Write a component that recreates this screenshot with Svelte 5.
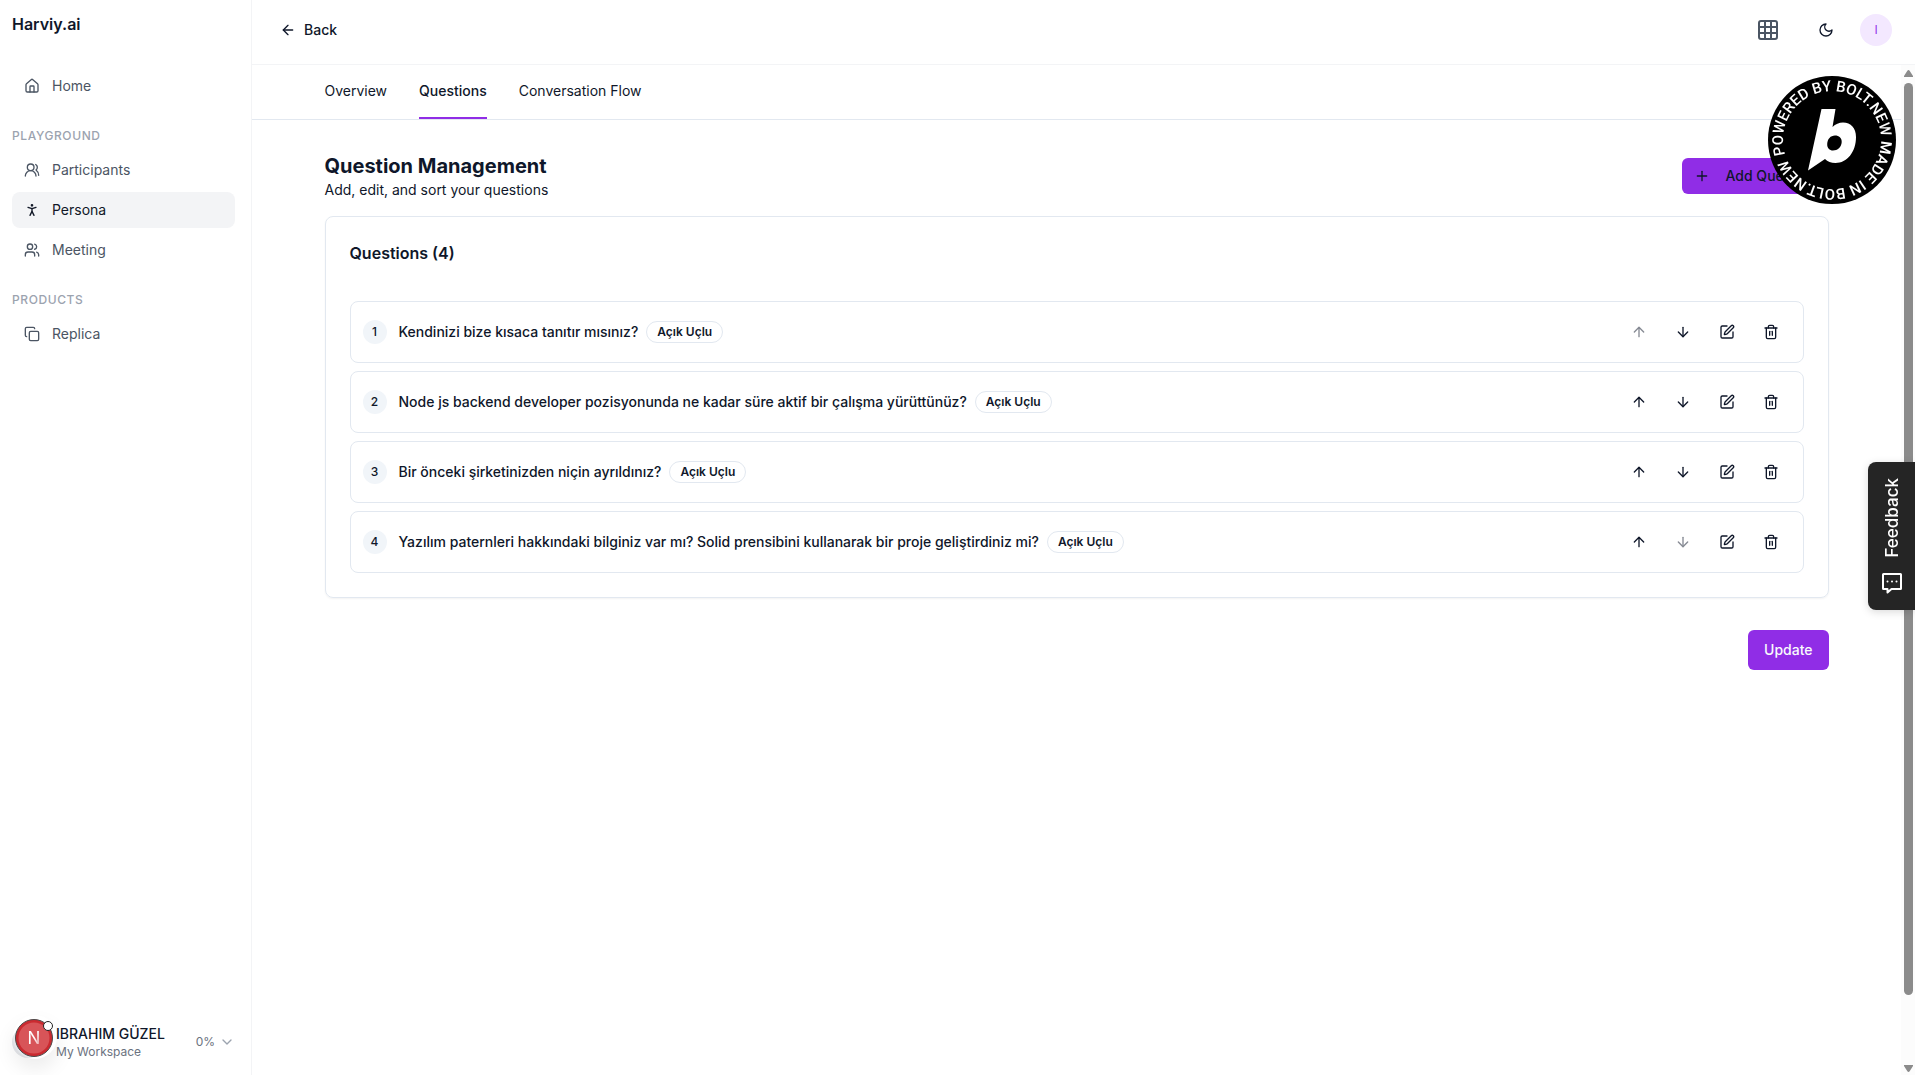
<script lang="ts">
    type Question = { text: string; type: string };

    const groups = [
        { title: "", items: [{ label: "Home", icon: "home" }] },
        {
            title: "Playground",
            items: [
                { label: "Participants", icon: "participants" },
                { label: "Persona", icon: "persona" },
                { label: "Meeting", icon: "meeting" },
            ],
        },
        { title: "Products", items: [{ label: "Replica", icon: "replica" }] },
    ];

    const tabs = ["Overview", "Questions", "Conversation Flow"];

    // lucide outlines, 24x24
    const icons: Record<string, string[]> = {
        home: [
            "M15 21v-8a1 1 0 0 0-1-1h-4a1 1 0 0 0-1 1v8",
            "M3 10a2 2 0 0 1 .709-1.528l7-5.999a2 2 0 0 1 2.582 0l7 5.999A2 2 0 0 1 21 10v9a2 2 0 0 1-2 2H5a2 2 0 0 1-2-2z",
        ],
        participants: [
            "M18 21a8 8 0 0 0-16 0",
            "M10 13a5 5 0 1 0 0-10a5 5 0 0 0 0 10z",
            "M22 20c0-3.37-2-6.5-4-8a5 5 0 0 0-.45-8.3",
        ],
        meeting: [
            "M16 21v-2a4 4 0 0 0-4-4H6a4 4 0 0 0-4 4v2",
            "M9 11a4 4 0 1 0 0-8a4 4 0 0 0 0 8z",
            "M22 21v-2a4 4 0 0 0-3-3.87",
            "M16 3.13a4 4 0 0 1 0 7.75",
        ],
        persona: [
            "M12 6a1 1 0 1 0 0-2a1 1 0 0 0 0 2z",
            "m9 20 3-6 3 6",
            "m6 8 6 2 6-2",
            "M12 10v4",
        ],
        replica: [
            "M10 8h10a2 2 0 0 1 2 2v10a2 2 0 0 1-2 2H10a2 2 0 0 1-2-2V10a2 2 0 0 1 2-2z",
            "M4 16c-1.1 0-2-.9-2-2V4c0-1.1.9-2 2-2h10c1.1 0 2 .9 2 2",
        ],
        back: ["m12 19-7-7 7-7", "M19 12H5"],
        grid: [
            "M5 3h14a2 2 0 0 1 2 2v14a2 2 0 0 1-2 2H5a2 2 0 0 1-2-2V5a2 2 0 0 1 2-2z",
            "M3 9h18",
            "M3 15h18",
            "M9 3v18",
            "M15 3v18",
        ],
        moon: ["M12 3a6 6 0 0 0 9 9 9 9 0 1 1-9-9Z"],
        plus: ["M5 12h14", "M12 5v14"],
        up: ["m5 12 7-7 7 7", "M12 19V5"],
        down: ["M12 5v14", "m19 12-7 7-7-7"],
        edit: [
            "M12 3H5a2 2 0 0 0-2 2v14a2 2 0 0 0 2 2h14a2 2 0 0 0 2-2v-7",
            "M18.375 2.625a1 1 0 0 1 3 3l-9.013 9.014a2 2 0 0 1-.853.505l-2.873.84a.5.5 0 0 1-.62-.62l.84-2.873a2 2 0 0 1 .506-.852z",
        ],
        trash: [
            "M3 6h18",
            "M19 6v14c0 1-1 2-2 2H7c-1 0-2-1-2-2V6",
            "M8 6V4c0-1 1-2 2-2h4c1 0 2 1 2 2v2",
            "M10 11v6",
            "M14 11v6",
        ],
        chevron: ["m6 9 6 6 6-6"],
    };

    let activeItem = $state("Persona");
    let activeTab = $state("Questions");
    let questions = $state<Question[]>([
        { text: "Kendinizi bize kısaca tanıtır mısınız?", type: "Açık Uçlu" },
        {
            text: "Node js backend developer pozisyonunda ne kadar süre aktif bir çalışma yürüttünüz?",
            type: "Açık Uçlu",
        },
        { text: "Bir önceki şirketinizden niçin ayrıldınız?", type: "Açık Uçlu" },
        {
            text: "Yazılım paternleri hakkındaki bilginiz var mı? Solid prensibini kullanarak bir proje geliştirdiniz mi?",
            type: "Açık Uçlu",
        },
    ]);

    function move(index: number, step: number) {
        const [item] = questions.splice(index, 1);
        questions.splice(index + step, 0, item);
    }

    function remove(index: number) {
        questions.splice(index, 1);
    }
</script>

{#snippet icon(name: string, size = 16)}
    <svg
        class="icon"
        width={size}
        height={size}
        viewBox="0 0 24 24"
        aria-hidden="true"
    >
        {#each icons[name] as d}
            <path {d} />
        {/each}
    </svg>
{/snippet}

<div class="app">
    <aside class="sidebar">
        <div class="brand">Harviy.ai</div>
        <nav class="menu">
            {#each groups as group}
                <div class="group">
                    {#if group.title}
                        <div class="group-title">{group.title}</div>
                    {/if}
                    <div class="group-items">
                        {#each group.items as item}
                            <a
                                href="#{item.icon}"
                                class="menu-item"
                                class:active={activeItem === item.label}
                                onclick={() => (activeItem = item.label)}
                            >
                                {@render icon(item.icon)}
                                <span>{item.label}</span>
                            </a>
                        {/each}
                    </div>
                </div>
            {/each}
        </nav>
        <button class="account">
            <span class="account-avatar"></span>
            <span class="account-text">
                <span class="account-name">IBRAHIM GÜZEL</span>
                <span class="account-space">My Workspace</span>
            </span>
            <span class="account-usage">0%</span>
            {@render icon("chevron")}
        </button>
    </aside>

    <div class="main">
        <header class="topbar">
            <button class="back">
                {@render icon("back")}
                Back
            </button>
            <div class="topbar-actions">
                <button class="icon-button grid-button" aria-label="Apps">
                    {@render icon("grid", 24)}
                </button>
                <button class="icon-button moon-button" aria-label="Theme">
                    {@render icon("moon")}
                </button>
                <button class="user">I</button>
            </div>
        </header>

        <div class="body">
            <div class="page">
                <nav class="tabs">
                    <div class="container tab-list">
                        {#each tabs as tab}
                            <button
                                class="tab"
                                class:selected={activeTab === tab}
                                onclick={() => (activeTab = tab)}>{tab}</button
                            >
                        {/each}
                    </div>
                </nav>

                <main class="container content">
                    <div class="heading">
                        <div>
                            <h1>Question Management</h1>
                            <p>Add, edit, and sort your questions</p>
                        </div>
                        <button class="add">
                            {@render icon("plus")}
                            Add Question
                        </button>
                    </div>

                    <section class="card">
                        <h2>Questions ({questions.length})</h2>
                        <ul class="questions">
                            {#each questions as question, i (question.text)}
                                <li class="question">
                                    <span class="number">{i + 1}</span>
                                    <div class="question-body">
                                        <span class="question-text">{question.text}</span>
                                        <span class="badge">{question.type}</span>
                                    </div>
                                    <div class="actions">
                                        <button
                                            aria-label="Move up"
                                            disabled={i === 0}
                                            onclick={() => move(i, -1)}
                                        >
                                            {@render icon("up")}
                                        </button>
                                        <button
                                            aria-label="Move down"
                                            disabled={i === questions.length - 1}
                                            onclick={() => move(i, 1)}
                                        >
                                            {@render icon("down")}
                                        </button>
                                        <button aria-label="Edit">
                                            {@render icon("edit")}
                                        </button>
                                        <button
                                            aria-label="Delete"
                                            onclick={() => remove(i)}
                                        >
                                            {@render icon("trash")}
                                        </button>
                                    </div>
                                </li>
                            {/each}
                        </ul>
                    </section>

                    <div class="footer">
                        <button class="update">Update</button>
                    </div>
                </main>
            </div>

            <!-- Scroll rail -->
            <div class="rail" aria-hidden="true">
                <svg width="9" height="7" viewBox="0 0 9 7">
                    <path d="M4.5 0Q5.2 0 5.8 1L9 6V7H0V6L3.2 1Q3.8 0 4.5 0Z" />
                </svg>
                <div class="thumb"></div>
                <svg width="9" height="7" viewBox="0 0 9 7">
                    <path d="M4.5 7Q5.2 7 5.8 6L9 1V0H0V1L3.2 6Q3.8 7 4.5 7Z" />
                </svg>
            </div>
        </div>
    </div>
</div>

<a class="bolt" href="#bolt" aria-label="Powered by Bolt.new">
    <svg width="128" height="128" viewBox="0 0 128 128">
        <defs>
            <path id="ring" d="M64 113A49 49 0 0 1 64 15A49 49 0 0 1 64 113A49 49 0 0 1 15 64" />
        </defs>
        <circle cx="64" cy="64" r="64" />
        <text class="bolt-text">
            <textPath href="#ring" startOffset="62">POWERED BY BOLT.NEW MADE IN BOLT.NEW</textPath>
        </text>
        <path
            class="bolt-mark"
            fill-rule="evenodd"
            d="M53.5 33H67.5L64.5 51C67.5 48 71 46.5 75 46.5C83 46.5 88 52 88 61C88 76 79 87 67.5 87C63 87 59.5 85.5 57 83L40 94.5ZM67 59.5C62.5 59.5 59.5 63 59.2 68C59 72 61.5 74.5 65 74.5C69.5 74.5 73.5 71 73.7 66C73.9 62 71 59.5 67 59.5Z"
        />
    </svg>
</a>

<button class="feedback">
    <span>Feedback</span>
    <svg width="22" height="22" viewBox="0 0 22 22" aria-hidden="true">
        <path d="M2.5 2H19.5Q20 2 20 2.5V16.5Q20 17 19.5 17H10.5L6.5 20.5V17H2.5Q2 17 2 16.5V2.5Q2 2 2.5 2Z" />
        <path class="dots" d="M6.5 9.5h.01M11 9.5h.01M15.5 9.5h.01" />
    </svg>
</button>

<button class="dev-badge" aria-label="Dev tools">
    <svg width="44" height="44" viewBox="0 0 44 44">
        <defs>
            <linearGradient id="fade" x1="0" y1="0" x2="1" y2="1">
                <stop offset="0.5" stop-color="#fff" />
                <stop offset="1" stop-color="#fff" stop-opacity="0.3" />
            </linearGradient>
        </defs>
        <circle cx="21" cy="23" r="18.5" fill="#ca2a30" stroke="#4a4a4a" />
        <circle cx="21" cy="23" r="15.5" fill="#d85458" />
        <text x="21" y="29" text-anchor="middle" fill="url(#fade)">N</text>
        <circle cx="35" cy="11" r="4.5" fill="#fff" stroke="#222" />
    </svg>
</button>

<style>
    :global(body) {
        margin: 0;
        background: #fff;
        color: #0f172a;
        font-family: Inter, "Liberation Sans", sans-serif;
        font-size: 14px;
        line-height: 20px;
    }

    button {
        padding: 0;
        border: 0;
        background: none;
        color: inherit;
        font: inherit;
        cursor: pointer;
    }

    h1,
    h2,
    p,
    ul {
        margin: 0;
        padding: 0;
    }

    .icon {
        display: block;
        flex: none;
        fill: none;
        stroke: currentColor;
        stroke-width: 2;
        stroke-linecap: round;
        stroke-linejoin: round;
    }

    .app {
        display: flex;
        height: 100vh;
    }

    /* Sidebar */
    .sidebar {
        display: flex;
        flex-direction: column;
        flex: none;
        box-sizing: border-box;
        width: 252px;
        padding: 12px 16px 15px 12px;
        border-right: 1px solid #f3f4f6;
    }

    .brand {
        margin-bottom: 32px;
        font-size: 16px;
        font-weight: 600;
        line-height: 24px;
    }

    .menu {
        display: flex;
        flex-direction: column;
        flex: 1;
        gap: 24px;
    }

    .group-title {
        margin-bottom: 8px;
        color: #9ca3af;
        font-size: 12px;
        font-weight: 500;
        line-height: 16px;
        letter-spacing: 0.05em;
        text-transform: uppercase;
    }

    .group-items {
        display: flex;
        flex-direction: column;
        gap: 4px;
    }

    .menu-item {
        display: flex;
        align-items: center;
        gap: 12px;
        padding: 8px 12px;
        border-radius: 8px;
        color: #4b5563;
        text-decoration: none;
    }

    .menu-item.active {
        background: #f3f4f6;
        color: #111827;
    }

    .account {
        display: flex;
        align-items: center;
        text-align: left;
        color: #9ca3af;
    }

    .account-avatar {
        width: 32px;
        height: 32px;
        margin-right: 12px;
        border-radius: 50%;
        background: #e5e7eb;
    }

    .account-text {
        display: flex;
        flex: 1;
        flex-direction: column;
    }

    .account-name {
        color: #0f172a;
        font-weight: 500;
    }

    .account-space,
    .account-usage {
        color: #6b7280;
        font-size: 12px;
        line-height: 16px;
    }

    .account-usage {
        margin-right: 4px;
    }

    /* Top bar */
    .main {
        display: flex;
        flex: 1;
        flex-direction: column;
        min-width: 0;
    }

    .topbar {
        display: flex;
        align-items: center;
        justify-content: space-between;
        padding: 14px 23px 18px 28px;
        border-bottom: 1px solid #f3f4f6;
    }

    .back {
        display: flex;
        align-items: center;
        gap: 8px;
        font-weight: 500;
    }

    .topbar-actions {
        display: flex;
        align-items: center;
    }

    .icon-button {
        display: grid;
        place-items: center;
        height: 32px;
    }

    .grid-button {
        width: 48px;
        margin-right: 16px;
        color: #4b5563;
    }

    .moon-button {
        width: 36px;
        margin-right: 16px;
    }

    .user {
        width: 32px;
        height: 32px;
        border-radius: 50%;
        background: #f3e8ff;
        color: #9333ea;
        font-size: 12px;
    }

    /* Scrolling area */
    .body {
        display: flex;
        flex: 1;
        min-height: 0;
    }

    .page {
        flex: 1;
        min-width: 0;
        overflow: hidden;
    }

    .container {
        box-sizing: border-box;
        max-width: 1536px;
        margin: 0 auto;
        padding-right: 16px;
        padding-left: 16px;
    }

    .rail {
        display: flex;
        flex-direction: column;
        align-items: center;
        gap: 6px;
        box-sizing: border-box;
        width: 14px;
        padding: 5px 0 3px;
        background: #fcfcfc;
    }

    .rail svg {
        fill: #8b8b8b;
    }

    .thumb {
        width: 9px;
        height: 91%;
        margin-bottom: auto;
        border-radius: 5px;
        background: #8b8b8b;
    }

    /* Tabs */
    .tabs {
        border-bottom: 1px solid #e2e8f0;
    }

    .tab-list {
        display: flex;
        gap: 32px;
    }

    .tab {
        padding: 16px 0;
        border-bottom: 2px solid transparent;
    }

    .tab.selected {
        border-color: #902de6;
        font-weight: 500;
    }

    /* Questions */
    .content {
        padding-top: 32px;
    }

    .heading {
        display: flex;
        align-items: center;
        justify-content: space-between;
        margin-bottom: 16px;
    }

    h1 {
        font-size: 20px;
        font-weight: 700;
        line-height: 28px;
    }

    .add {
        display: flex;
        align-items: center;
        gap: 16px;
        height: 36px;
        padding: 0 12px;
        border-radius: 6px;
        background: #902de6;
        font-weight: 500;
    }

    .card {
        padding: 24px;
        border: 1px solid #e2e8f0;
        border-radius: 8px;
        box-shadow: 0 1px 2px rgba(0, 0, 0, 0.05);
    }

    h2 {
        margin-bottom: 36px;
        font-size: 16px;
        font-weight: 600;
        line-height: 24px;
    }

    .questions {
        display: flex;
        flex-direction: column;
        gap: 8px;
        list-style: none;
    }

    .question {
        display: flex;
        align-items: center;
        gap: 12px;
        padding: 12px;
        border: 1px solid #e2e8f0;
        border-radius: 8px;
    }

    .number {
        width: 24px;
        border-radius: 50%;
        background: #f1f5f9;
        font-size: 12px;
        font-weight: 500;
        line-height: 24px;
        text-align: center;
    }

    .question-body {
        display: flex;
        align-items: center;
        flex: 1;
        gap: 8px;
    }

    .question-text {
        font-weight: 500;
    }

    .badge {
        padding: 2px 10px;
        border: 1px solid #e2e8f0;
        border-radius: 11px;
        font-size: 12px;
        font-weight: 600;
        line-height: 16px;
        white-space: nowrap;
    }

    .actions {
        display: flex;
        gap: 4px;
    }

    .actions button {
        display: grid;
        place-items: center;
        width: 40px;
        height: 36px;
    }

    .actions button:disabled {
        opacity: 0.5;
        cursor: default;
    }

    .footer {
        display: flex;
        justify-content: flex-end;
        margin-top: 32px;
    }

    .update {
        height: 40px;
        padding: 0 16px;
        border-radius: 6px;
        background: #902de6;
        color: #f8fafc;
        font-weight: 500;
    }

    /* Floating widgets */
    .bolt {
        position: fixed;
        top: 76px;
        right: 19px;
        height: 128px;
    }

    .bolt-text {
        fill: #fff;
        font-family: Roboto, Inter, sans-serif;
        font-size: 15px;
        font-weight: 500;
    }

    .bolt-mark {
        fill: #fff;
    }

    .feedback {
        position: fixed;
        top: 462px;
        right: 0;
        display: flex;
        flex-direction: column;
        align-items: center;
        justify-content: space-between;
        box-sizing: border-box;
        width: 47px;
        height: 148px;
        padding: 16px 0;
        border-radius: 8px 0 0 8px;
        background: #252525;
        box-shadow: 0 2px 8px rgba(0, 0, 0, 0.15);
        color: #fff;
        font-size: 17px;
        font-weight: 500;
    }

    .feedback span {
        writing-mode: vertical-rl;
        transform: rotate(180deg);
    }

    .feedback svg {
        fill: none;
        stroke: #fff;
        stroke-width: 2;
        stroke-linejoin: round;
        stroke-linecap: round;
    }

    .dev-badge {
        position: fixed;
        bottom: 16px;
        left: 13px;
        height: 44px;
        border-radius: 50%;
        box-shadow: 0 10px 20px rgba(0, 0, 0, 0.08);
    }

    .dev-badge text {
        font-size: 17px;
    }
</style>
